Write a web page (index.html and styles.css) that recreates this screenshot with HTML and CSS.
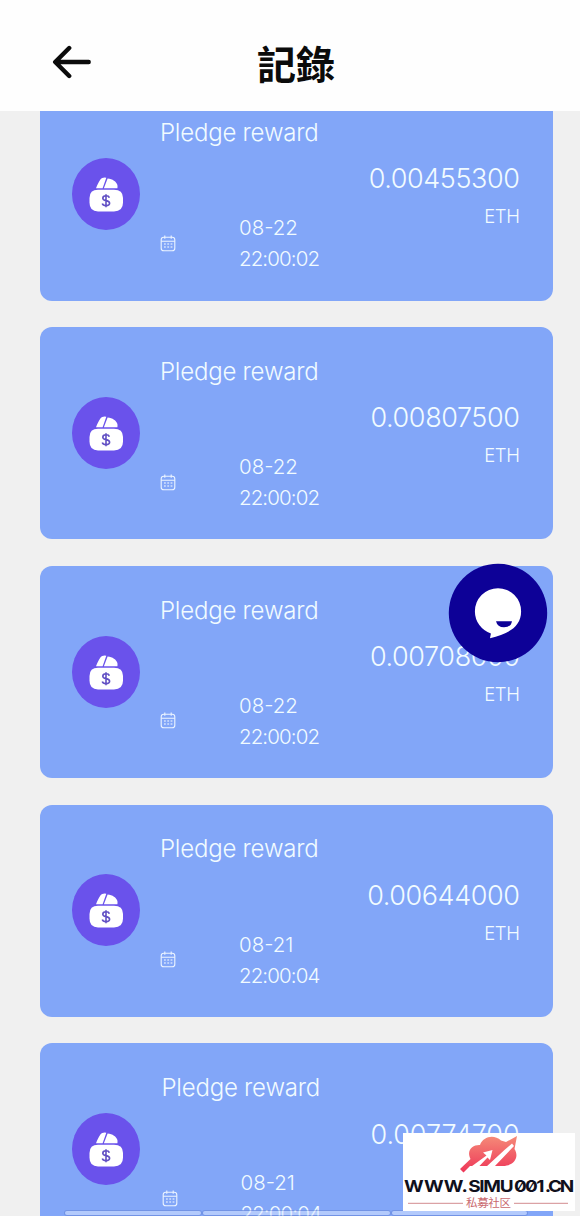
FILE: index.html
```html
<!DOCTYPE html>
<html lang="zh-Hant">
<head>
<meta charset="utf-8">
<title>記錄</title>
<link rel="stylesheet" href="styles.css">
</head>
<body>
<svg class="defs" aria-hidden="true">
  <symbol id="bag" viewBox="0 0 68 72">
    <ellipse cx="34" cy="36" rx="34" ry="36" fill="#6a52eb"/>
    <path d="M24 30.200 C26 25.500 28 20.800 30.200 19.900 Q32 19.400 34.300 19.700 L30.600 30.200Z M31.900 30.200 L35.600 20.600 C40.500 20.800 44.500 24 45.400 27 Q45.700 29 45.400 30.200Z" fill="#fff"/>
    <path d="M26 31.800H42Q51 31.800 51 40V44.500Q51 53.400 42 53.400H26Q17.500 53.400 17.500 44.500V40Q17.500 31.800 26 31.800Z" fill="#fff"/>
    <path d="M37.300 39.700Q36.800 37.800 34 37.800Q30.800 37.800 30.800 40.200Q30.800 42 34 42.600Q37.600 43.200 37.600 45.300Q37.600 47.600 34 47.600Q30.900 47.600 30.300 45.500M34 36.200V49.200" fill="none" stroke="#6250c4" stroke-width="1.600"/>
  </symbol>
  <symbol id="calendar" viewBox="0 0 16 17">
    <g fill="none" stroke="#edf5ff" stroke-width="1.100">
      <rect x="1.200" y="2.200" width="13.600" height="13.600" rx="2.600"/>
      <path d="M1.200 6.200H14.800M4.800 .6V3.800M11.200 .6V3.800"/>
    </g>
    <path d="M4 9H12.500M4 12H12.500" stroke="#edf5ff" stroke-width="1.300" stroke-dasharray="1.800 1.500" opacity=".75"/>
  </symbol>
</svg>
<header class="topbar">
  <svg class="back" viewBox="0 0 40 34"><path d="M18.200 3 4.200 17 18.200 31M4.700 17H37.700" fill="none" stroke="#0b0b0b" stroke-width="4.400" stroke-linecap="round" stroke-linejoin="round"/></svg>
  <h1 class="heading">記錄</h1>
</header>
<main class="viewport">
  <div class="list">
    <article class="card">
      <svg class="bag"><use href="#bag"/></svg>
      <div class="info"><div class="name">Pledge reward</div><div class="when"><svg class="calendar"><use href="#calendar"/></svg><time class="time">08-22<br><span class="clock">22:00:02</span></time></div></div>
      <div class="value"><div class="amount">0.00455300</div><div class="unit">ETH</div></div>
    </article>
    <article class="card">
      <svg class="bag"><use href="#bag"/></svg>
      <div class="info"><div class="name">Pledge reward</div><div class="when"><svg class="calendar"><use href="#calendar"/></svg><time class="time">08-22<br><span class="clock">22:00:02</span></time></div></div>
      <div class="value"><div class="amount">0.00807500</div><div class="unit">ETH</div></div>
    </article>
    <article class="card">
      <svg class="bag"><use href="#bag"/></svg>
      <div class="info"><div class="name">Pledge reward</div><div class="when"><svg class="calendar"><use href="#calendar"/></svg><time class="time">08-22<br><span class="clock">22:00:02</span></time></div></div>
      <div class="value"><div class="amount">0.00708000</div><div class="unit">ETH</div></div>
    </article>
    <article class="card">
      <svg class="bag"><use href="#bag"/></svg>
      <div class="info"><div class="name">Pledge reward</div><div class="when"><svg class="calendar"><use href="#calendar"/></svg><time class="time">08-21<br><span class="clock">22:00:04</span></time></div></div>
      <div class="value"><div class="amount">0.00644000</div><div class="unit">ETH</div></div>
    </article>
    <article class="card card-last">
      <svg class="bag"><use href="#bag"/></svg>
      <div class="info"><div class="name">Pledge reward</div><div class="when"><svg class="calendar"><use href="#calendar"/></svg><time class="time">08-21<br><span class="clock">22:00:04</span></time></div></div>
      <div class="value"><div class="amount">0.00774700</div><div class="unit">ETH</div></div>
    </article>
  </div>
</main>
<div class="segments"><span></span><span></span><span></span></div>
<svg class="chat" viewBox="0 0 100 100">
  <circle cx="50" cy="50" r="49.200" fill="#0d0197"/>
  <path d="M50 25.200A23.100 23.100 0 0 1 73.100 48.500C73.100 64 60 71 42 75.200L42.900 70.400A23.100 23.100 0 0 1 26.900 48.500A23.100 23.100 0 0 1 50 25.200Z" fill="#fff"/>
  <path d="M48 58.200H64Q63 64.300 56 64.300Q49.400 64.300 48 58.200Z" fill="#0d0197"/>
</svg>
<aside class="mark">
  <svg class="mark-art" viewBox="0 0 172 78">
    <defs><linearGradient id="coral" x1="0" y1="0" x2="0" y2="1"><stop offset="0" stop-color="#f58b78"/><stop offset="1" stop-color="#ee3658"/></linearGradient></defs>
    <path d="M67.500 26C63 17 70 11.500 77 12C80 3.500 91 1 98 7.500L103 9L114 3L111.500 16C117 25 110 33 100 33H67L60.500 39.500L57 36Z" fill="url(#coral)"/>
    <path d="M67 34.500 83.500 22.500 80 19.500 89.500 17 87 27 84.500 24.500 75 34.500ZM83 34 102 16.500 109 10.500 111 13 91 34Z" fill="#fff"/>
    <path d="M5 70.300H60M111 70.300H165" stroke="#d38b8f" stroke-width="1"/>
    <text class="mark-url" transform="scale(1.15 1)" x=".9" y="58.900"><tspan textLength="55.500">WWW.</tspan><tspan x="56.700" textLength="39.500">SIMU</tspan><tspan x="96.500" textLength="26.500">001</tspan><tspan x="123.300" textLength="25.500">.CN</tspan></text>
    <text class="mark-name" x="63" y="74.300" textLength="45">私募社区</text>
  </svg>
</aside>
</body>
</html>
```
FILE: styles.css
```css
* { box-sizing: border-box; }
body {
  margin: 0;
  position: relative;
  width: 580px;
  height: 1216px;
  overflow: hidden;
  background: #f0f0f0;
  font-family: Inter, "Noto Sans CJK TC", sans-serif;
  display: flex;
  flex-direction: column;
}
.defs { position: absolute; width: 0; height: 0; }
.topbar {
  flex: none;
  height: 111px;
  background: #fefefe;
  display: grid;
  grid-template-columns: 94px 1fr 94px;
  align-items: center;
  padding-top: 13px;
}
.back { width: 40px; height: 34px; margin: -1px 0 0 51px; }
.heading {
  margin: 0 0 0 12px;
  text-align: center;
  font: 700 39px/56px "Noto Sans CJK TC", sans-serif;
  color: #0b0b0b;
}
.viewport { flex: 1; min-height: 0; overflow: hidden; }
.list {
  display: flex;
  flex-direction: column;
  gap: 26.300px;
  margin: -22.900px 27.500px 0 39.500px;
}
.card {
  flex: none;
  height: 212.500px;
  border-radius: 12px;
  background: #82a6f8;
  color: #f1fbff;
  display: flex;
  padding: 28.800px 33px 26.400px 32.500px;
}
.bag { flex: none; width: 68px; height: 72px; margin-top: 41.200px; }
.info {
  width: 180px;
  margin-left: 20px;
  display: flex;
  flex-direction: column;
  justify-content: space-between;
}
.name { font-size: 24px; line-height: 32px; font-weight: 350; letter-spacing: -.22px; white-space: nowrap; }
.when { display: flex; align-items: center; }
.calendar { width: 16px; height: 17px; margin-right: 63px; }
.time { font-size: 20.500px; line-height: 31px; font-weight: 350; white-space: nowrap; }
.clock { letter-spacing: -.9px; }
.value { flex: 1; text-align: right; padding-top: 43.500px; }
.amount { font-size: 27px; line-height: 37px; font-weight: 350; letter-spacing: -.42px; white-space: nowrap; }
.unit { font-size: 18.500px; line-height: 26px; margin-top: 5.800px; font-weight: 350; letter-spacing: -.4px; }
.card-last .info { margin-left: 21.500px; }
.card-last .amount { letter-spacing: -.1px; }
.segments {
  position: absolute;
  left: 65px;
  top: 1211px;
  width: 462px;
  display: grid;
  grid-template-columns: 136px 187px 135px;
  gap: 2px;
}
.segments span { height: 4px; border-radius: 2px; background: rgba(220, 232, 255, .55); box-shadow: 0 0 0 1px rgba(90, 120, 200, .4); }
.chat { position: absolute; left: 448px; top: 563px; width: 100px; height: 100px; }
.mark { position: absolute; left: 403px; top: 1133px; width: 172px; height: 78px; background: #fff; }
.mark-art { display: block; width: 172px; height: 78px; }
.mark-url { font: 700 16.500px Inter, sans-serif; font-feature-settings: "zero"; fill: #10101c; }
.mark-name { font: 400 11.500px "Noto Sans CJK SC", sans-serif; fill: #c9686e; }
```
